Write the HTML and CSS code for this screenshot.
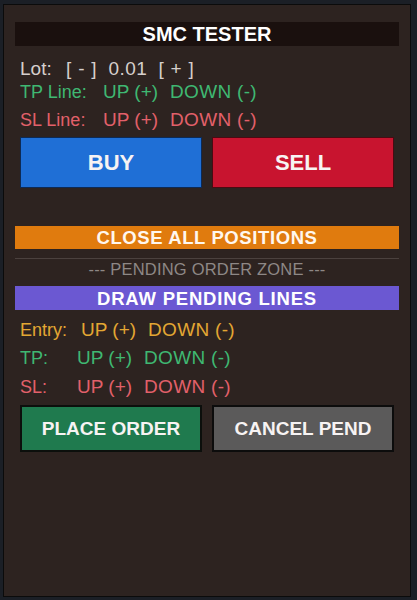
FILE: index.html
```html
<!DOCTYPE html>
<html>
<head>
<meta charset="utf-8">
<title>SMC Tester</title>
<link rel="stylesheet" href="styles.css">
</head>
<body>
<div class="panel">
  <div class="title">SMC TESTER</div>

  <div class="row row-lot">
    <span class="lbl-lot">Lot:</span>
    <span class="lot-btn">[ - ]</span>
    <span class="lot-val">0.01</span>
    <span class="lot-btn">[ + ]</span>
  </div>
  <div class="row row-tp green">
    <span class="lbl-line">TP Line:</span>
    <span class="opt">UP (+)</span>
    <span class="opt">DOWN (-)</span>
  </div>
  <div class="row row-sl red">
    <span class="lbl-line">SL Line:</span>
    <span class="opt">UP (+)</span>
    <span class="opt">DOWN (-)</span>
  </div>

  <div class="btn-pair btn-pair-main">
    <div class="btn btn-buy">BUY</div>
    <div class="btn btn-sell">SELL</div>
  </div>

  <div class="bar bar-close">CLOSE ALL POSITIONS</div>
  <div class="sep"></div>
  <div class="zone">--- PENDING ORDER ZONE ---</div>
  <div class="bar bar-draw">DRAW PENDING LINES</div>

  <div class="row row-entry amber">
    <span class="lbl-entry">Entry:</span>
    <span class="opt">UP (+)</span>
    <span class="opt">DOWN (-)</span>
  </div>
  <div class="row row-ptp green">
    <span class="lbl-short">TP:</span>
    <span class="opt">UP (+)</span>
    <span class="opt">DOWN (-)</span>
  </div>
  <div class="row row-psl red">
    <span class="lbl-short">SL:</span>
    <span class="opt">UP (+)</span>
    <span class="opt">DOWN (-)</span>
  </div>

  <div class="btn-pair btn-pair-pend">
    <div class="btn btn-place">PLACE ORDER</div>
    <div class="btn btn-cancel">CANCEL PEND</div>
  </div>
</div>
</body>
</html>
```

FILE: styles.css
```css
* { box-sizing: border-box; }

html, body {
  margin: 0;
  padding: 0;
  background: #1b1f26;
  width: 417px;
  height: 600px;
  overflow: hidden;
  font-family: "Liberation Sans", Arial, sans-serif;
}

.panel {
  margin: 4px 6px 0 3px;
  width: 408px;
  height: 593px;
  border: 1px solid #0b0b0b;
  background: #2d2320;
  padding: 17px 11px 0 11px;
  display: flex;
  flex-direction: column;
}

.title {
  height: 24px;
  line-height: 25px;
  background: #1a100e;
  color: #ffffff;
  font-weight: bold;
  font-size: 20px;
  text-align: center;
}

.row {
  display: flex;
  align-items: center;
  height: 22px;
  padding-left: 5px;
  font-size: 18px;
  white-space: nowrap;
}

.row-lot { margin-top: 12px; color: #d6cfcc; font-size: 19px; }
.row-tp { margin-top: 1px; }
.row-sl { margin-top: 6px; }
.row-entry { margin-top: 9px; }
.row-ptp { margin-top: 6px; }
.row-psl { margin-top: 7px; }

.green { color: #3fb872; }
.red { color: #e2606a; }
.amber { color: #e3a733; }

.lbl-lot { width: 46px; }
.lot-btn { letter-spacing: 0.8px; }
.lot-val { margin: 0 11px 0 11px; letter-spacing: 0.5px; }

.lbl-line { width: 83px; }
.lbl-entry { width: 61px; }
.lbl-short { width: 57px; }

.opt { font-size: 19px; margin-right: 12px; }
.opt + .opt { letter-spacing: 0.3px; }

.btn-pair {
  display: flex;
  gap: 10px;
  padding: 0 5px;
}
.btn-pair-main { margin-top: 6px; height: 51px; }
.btn-pair-pend { margin-top: 7px; height: 47px; }

.btn {
  flex: 1;
  display: flex;
  align-items: center;
  justify-content: center;
  border: 1px solid #121010;
  color: #f7f3f3;
  font-weight: bold;
}
.btn-buy { background: #1f6fd6; font-size: 22px; border-color: #0d2a55; }
.btn-sell { background: #c8142f; font-size: 22px; border-color: #4a0b12; }
.btn-place { background: #1f7a4e; font-size: 19px; border-color: #0c0f0c; border-width: 2px; }
.btn-cancel { background: #5b5a5a; font-size: 19px; border-color: #0c0c0c; border-width: 2px; }

.bar {
  color: #fff7ee;
  font-weight: bold;
  font-size: 18.5px;
  text-align: center;
  letter-spacing: 0.6px;
}
.bar-close {
  margin-top: 38px;
  height: 23px;
  line-height: 24px;
  background: #e07b0e;
}
.bar-draw {
  margin-top: 5px;
  height: 24px;
  line-height: 25px;
  background: #6b58d2;
  color: #ffffff;
  letter-spacing: 0.8px;
}

.sep {
  margin-top: 9px;
  height: 1px;
  background: #4b413e;
}

.zone {
  height: 22px;
  line-height: 20px;
  text-align: center;
  color: #8e8886;
  font-size: 16.5px;
  letter-spacing: 0.2px;
}
```
